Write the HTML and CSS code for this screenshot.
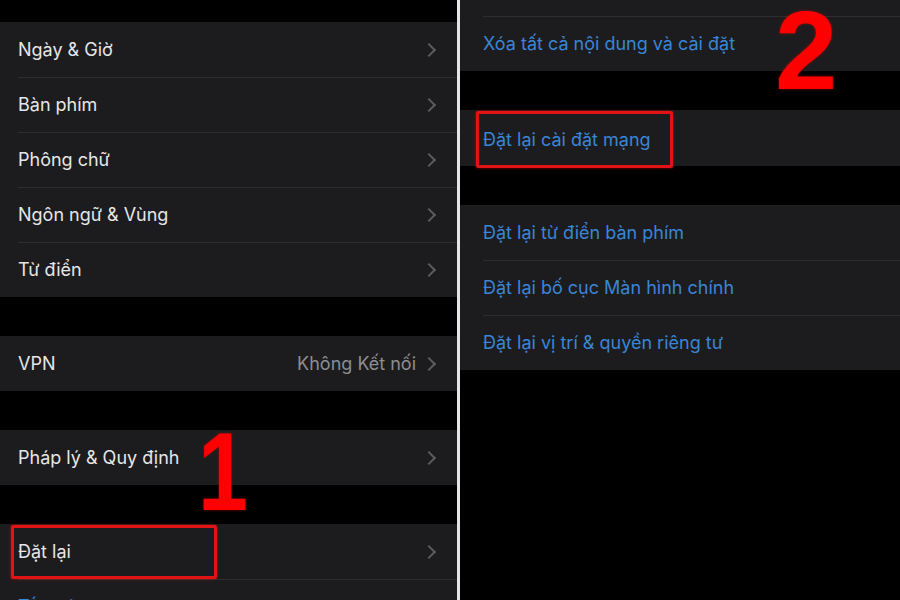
FILE: index.html
```html
<!DOCTYPE html>
<html lang="vi">
<head>
  <meta charset="UTF-8" />
  <title>Cài đặt chung - Đặt lại</title>
  <link rel="stylesheet" href="styles.css">
</head>
<body>
  <div class="screen left">
    <div class="group">
      <div class="row"><span class="label">Ngày &amp; Giờ</span><span class="chev"></span></div>
      <div class="row"><span class="label">Bàn phím</span><span class="chev"></span></div>
      <div class="row"><span class="label">Phông chữ</span><span class="chev"></span></div>
      <div class="row"><span class="label">Ngôn ngữ &amp; Vùng</span><span class="chev"></span></div>
      <div class="row"><span class="label">Từ điển</span><span class="chev"></span></div>
    </div>
    <div class="group">
      <div class="row"><span class="label">VPN</span><span class="value">Không Kết nối</span><span class="chev"></span></div>
    </div>
    <div class="group">
      <div class="row"><span class="label">Pháp lý &amp; Quy định</span><span class="chev"></span></div>
    </div>
    <div class="group">
      <div class="row"><span class="label">Đặt lại</span><span class="chev"></span></div>
      <div class="row"><span class="label blue">Tắt máy</span></div>
    </div>

    <div class="mark mark-left"></div>
    <div class="step step-1">1</div>
  </div>

  <div class="screen right">
    <div class="group first">
      <div class="row"><span class="label blue">Chuyển dữ liệu hoặc đặt lại</span></div>
      <div class="row"><span class="label blue">Xóa tất cả nội dung và cài đặt</span></div>
    </div>
    <div class="group">
      <div class="row tall"><span class="label blue">Đặt lại cài đặt mạng</span></div>
    </div>
    <div class="group">
      <div class="row"><span class="label blue">Đặt lại từ điển bàn phím</span></div>
      <div class="row"><span class="label blue">Đặt lại bố cục Màn hình chính</span></div>
      <div class="row"><span class="label blue">Đặt lại vị trí &amp; quyền riêng tư</span></div>
    </div>

    <div class="mark mark-right"></div>
    <div class="step step-2">2</div>
  </div>
</body>
</html>
```

FILE: styles.css
```css
body {
  margin: 0;
  width: 900px;
  height: 600px;
  overflow: hidden;
  display: flex;
  background: #000;
  font-family: Inter, "Noto Sans", sans-serif;
  font-size: 18px;
  color: #e6e6e6;
}

.screen {
  position: relative;
  display: flex;
  flex-direction: column;
  gap: 39px;
  overflow: hidden;
}

.left {
  width: 457px;
  padding-top: 22px;
  border-right: 3px solid #e4e4e4;
}

.right {
  flex: 1;
}

.group {
  background: #1c1c1e;
}

.right .first {
  margin-top: -39px;
}

.row {
  height: 55px;
  display: flex;
  align-items: center;
  padding: 0 21px 0 18px;
  position: relative;
}

.right .row {
  padding-left: 23px;
}

.right .tall {
  height: 56px;
  padding-top: 2px;
  box-sizing: border-box;
}

.right .group:last-of-type .row {
  padding-top: 2px;
  box-sizing: border-box;
}

.row + .row::before {
  content: "";
  position: absolute;
  top: 0;
  left: 18px;
  right: 0;
  border-top: 1px solid #2e2e30;
}

.right .row + .row::before {
  left: 23px;
}

.label {
  flex: 1;
}

.blue {
  color: #3a85d6;
}

.value {
  color: #8d8d92;
  margin-right: 8px;
}

.chev {
  width: 8px;
  height: 8px;
  border-top: 2px solid #5c5c60;
  border-right: 2px solid #5c5c60;
  transform: rotate(45deg);
  margin-right: 2px;
}

/* annotations */
.mark {
  position: absolute;
  border: 3px solid #e01414;
  border-radius: 2px;
  box-shadow: 0 0 3px rgba(255, 0, 0, 0.6);
}

.mark-left {
  left: 11px;
  top: 525px;
  width: 200px;
  height: 48px;
}

.mark-right {
  left: 16px;
  top: 111px;
  width: 191px;
  height: 51px;
}

.step {
  position: absolute;
  font-family: "Liberation Sans", Arial, sans-serif;
  font-weight: bold;
  font-size: 112px;
  line-height: 1;
  color: #ff0000;
  text-shadow: 0 0 3px rgba(255, 0, 0, 0.5);
}

.step-1 {
  left: 198px;
  top: 416px;
  transform: scaleX(0.8);
  transform-origin: left top;
}

.step-2 {
  left: 315px;
  top: -5px;
}
```
